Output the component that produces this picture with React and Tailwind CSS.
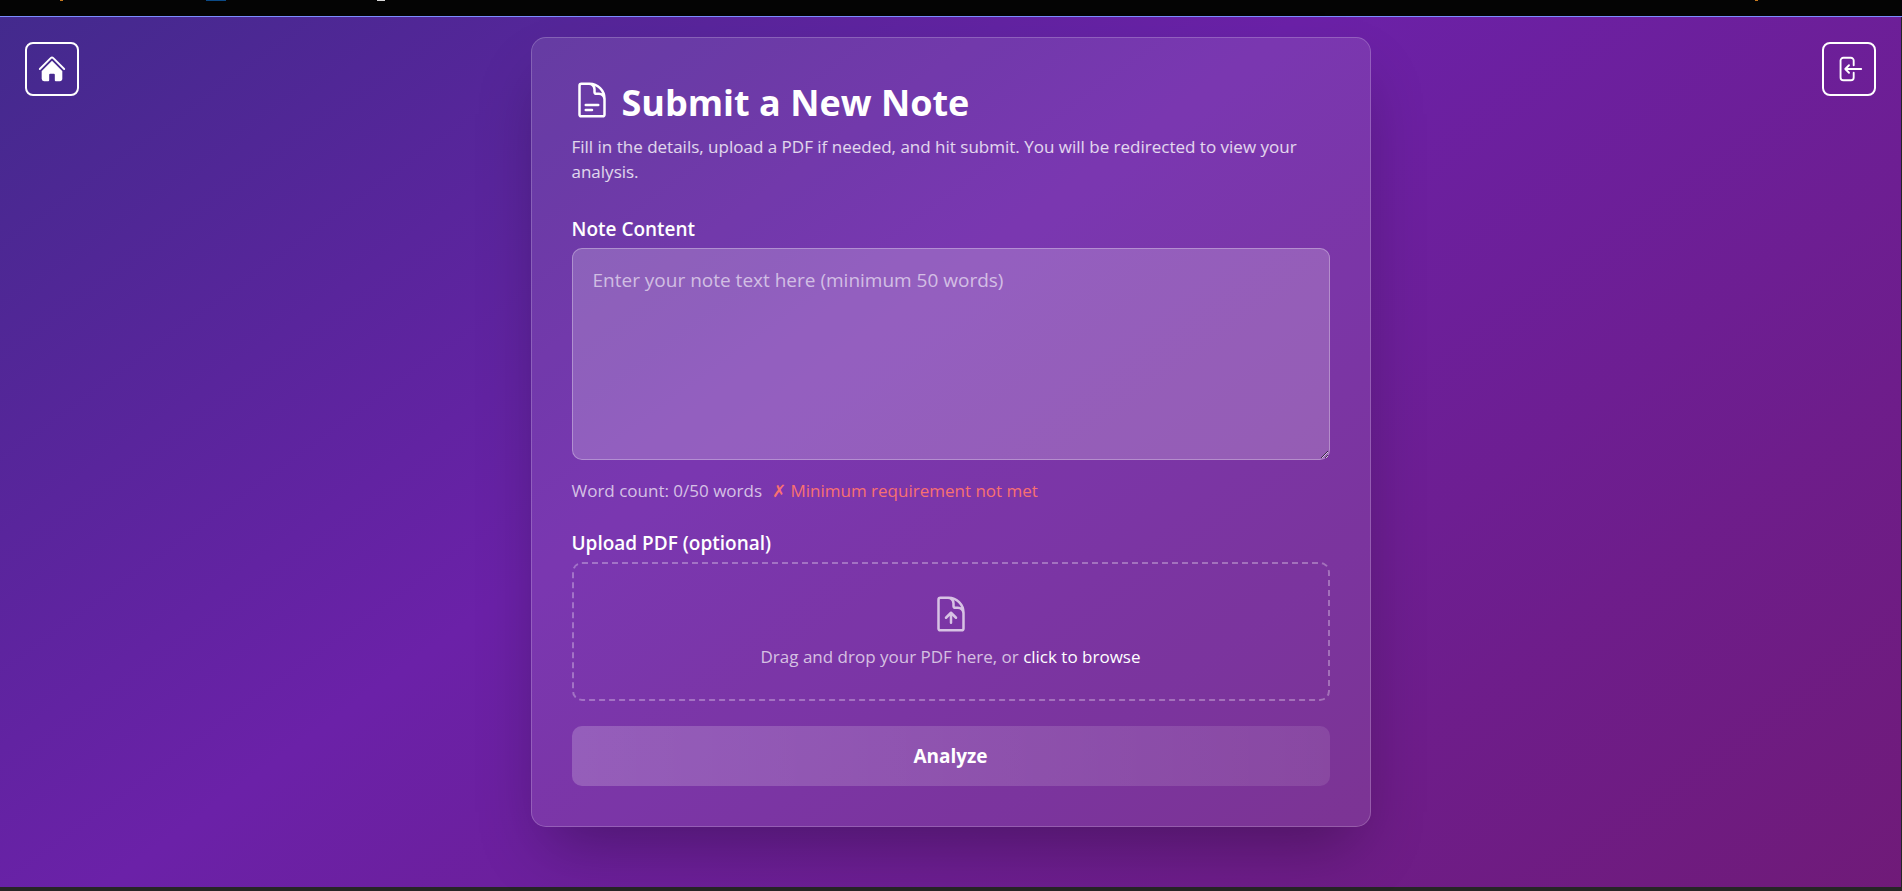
import { useState } from 'react'
import {
  HiHome,
  HiOutlineArrowLeftOnRectangle,
  HiOutlineDocumentArrowUp,
  HiOutlineDocumentText,
} from 'react-icons/hi2'

const MIN_WORDS = 50

function IconButton({ label, children }) {
  return (
    <button
      type="button"
      aria-label={label}
      className="h-fit rounded-lg border-2 border-white p-[10px] text-white hover:bg-white/10 transition-colors"
    >
      {children}
    </button>
  )
}

export default function App() {
  const [text, setText] = useState('')
  const words = text.trim() ? text.trim().split(/\s+/).length : 0

  return (
    <div className="min-h-screen flex flex-col bg-[#262626] font-['Segoe_UI','Open_Sans',sans-serif] text-white">
      {/* Window edge */}
      <div className="h-[17px] shrink-0 border-b border-[#7b8cff] bg-[#040404] flex items-start">
        <div className="ml-[60px] h-px w-[3px] bg-[#c87a1e]" />
        <div className="ml-[143px] h-px w-5 bg-[#0b4a86]" />
        <div className="ml-[151px] h-px w-2 bg-[#d8d8d8]" />
        <div className="ml-auto mr-[144px] h-px w-[3px] bg-[#c87a1e]" />
      </div>

      <div className="mb-1 mr-px flex flex-1 items-start justify-between px-[25px] bg-[linear-gradient(144deg,#312e81_-19%,#6b21a8_42%,#701a75_104%)]">
        <div className="pt-[25px]">
          <IconButton label="Home">
            <HiHome size={30} />
          </IconButton>
        </div>

        <main className="my-5 w-full max-w-[840px] rounded-[15px] border border-white/20 bg-white/10 p-10 shadow-[0_31px_62px_-15px_rgba(0,0,0,0.3)]">
          <h1 className="flex items-start gap-[10px] text-[36px] leading-[50px] font-bold">
            <HiOutlineDocumentText size={40} className="mt-0.5" />
            Submit a New Note
          </h1>
          <p className="mt-[6px] text-[17px] leading-[25px] text-white/80">
            Fill in the details, upload a PDF if needed, and hit submit. You will be redirected to view your analysis.
          </p>

          <form className="mt-[30px]" onSubmit={(e) => e.preventDefault()}>
            <label htmlFor="note" className="block text-[19px] leading-[30px] font-semibold">
              Note Content
            </label>
            <textarea
              id="note"
              value={text}
              onChange={(e) => setText(e.target.value)}
              placeholder="Enter your note text here (minimum 50 words)"
              className="mt-1 block h-[212px] w-full rounded-[10px] border border-white/30 bg-white/20 px-5 py-4 text-[19px] leading-[30px] placeholder:text-white/60"
            />
            <p className="mt-[18px] text-[17px] leading-[25px] text-white/70">
              Word count: {words}/{MIN_WORDS} words
              {words < MIN_WORDS && <span className="ml-[10px] text-[#f87171]">✗ Minimum requirement not met</span>}
            </p>

            <label htmlFor="pdf" className="mt-[25px] block text-[19px] leading-[30px] font-semibold">
              Upload PDF (optional)
            </label>
            <label
              htmlFor="pdf"
              className="mt-1 flex h-[139px] flex-col items-center justify-center gap-[10px] rounded-[10px] border-2 border-dashed border-white/30 text-[17px] leading-[25px] text-white/70"
            >
              <HiOutlineDocumentArrowUp size={40} />
              <span>
                Drag and drop your PDF here, or <span className="text-white">click to browse</span>
              </span>
              <input id="pdf" type="file" accept="application/pdf" className="sr-only" />
            </label>

            <button
              type="submit"
              className="mt-[25px] h-[60px] w-full rounded-[10px] bg-linear-to-r from-white/20 to-white/10 text-[19px] font-bold"
            >
              Analyze
            </button>
          </form>
        </main>

        <div className="pt-[25px]">
          <IconButton label="Log out">
            <HiOutlineArrowLeftOnRectangle size={30} />
          </IconButton>
        </div>
      </div>
    </div>
  )
}
